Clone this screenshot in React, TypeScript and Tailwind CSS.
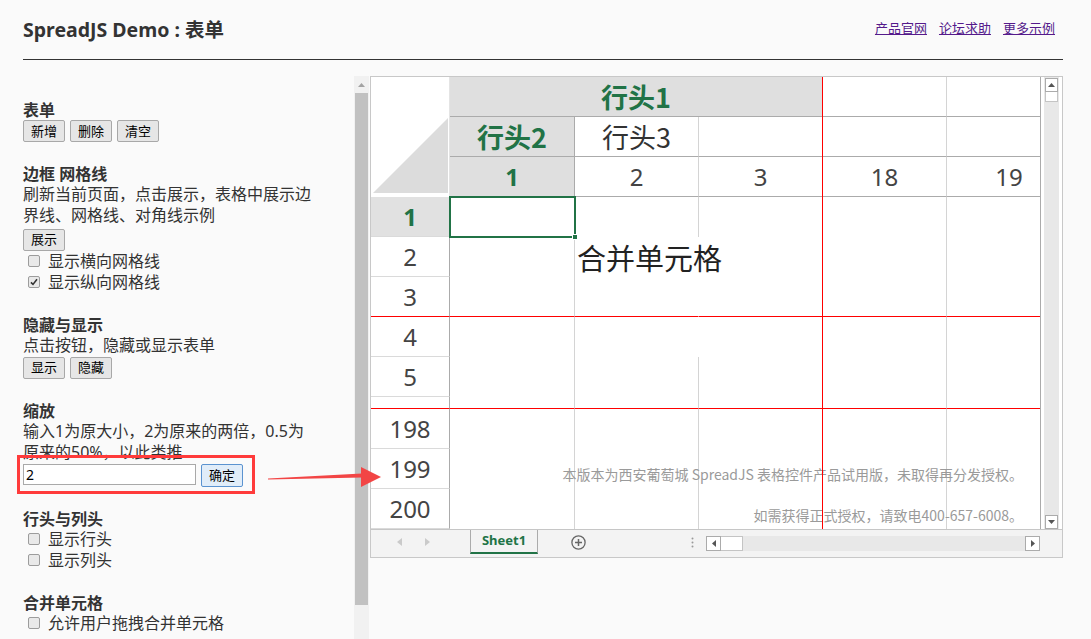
import React from 'react'

const FONT = "font-['Noto_Sans','Noto_Sans_CJK_SC',sans-serif]"
const CJK = "font-['Noto_Sans_CJK_SC','Noto_Sans',sans-serif]"

const Btn = ({ children, blue }: { children: React.ReactNode; blue?: boolean }) => (
  <button
    className={`h-[22px] w-[42px] rounded-[2px] border text-[13px] leading-none text-black ${
      blue ? 'h-[23px] border-[#5b93d0] bg-[#e1edf9]' : 'border-[#a8a8a8] bg-[#e6e6e6]'
    }`}
  >
    {children}
  </button>
)

const Check = ({ label, checked }: { label: string; checked?: boolean }) => (
  <div className="flex items-center h-[21px] pl-[5px]">
    <span className="w-[12px] h-[12px] rounded-[2px] border border-[#9c9c9c] bg-[#e9e9e9] flex items-center justify-center">
      {checked && (
        <svg viewBox="0 0 12 12" className="w-[10px] h-[10px]">
          <path d="M2.3 6.4 L4.8 8.9 L9.6 2.6" stroke="#333" strokeWidth="1.9" fill="none" />
        </svg>
      )}
    </span>
    <span className="ml-[8px] text-[16px] leading-[21px] text-[#333]">{label}</span>
  </div>
)

const Heading = ({ children, first }: { children: React.ReactNode; first?: boolean }) => (
  <div className={`${first ? '' : 'mt-[22px]'} h-[20px] leading-[20px] text-[16px] font-bold text-[#333]`}>{children}</div>
)

const Line = ({ children }: { children: React.ReactNode }) => (
  <div className="h-[21px] leading-[21px] text-[16px] text-[#333] whitespace-nowrap">{children}</div>
)

type RowProps = {
  label: string
  short?: boolean
  sel?: boolean
  red?: boolean
  merged?: boolean
  c1?: React.ReactNode
  c2?: React.ReactNode
}

// one grid row: row header + five visible columns (A, B, C | R, S)
const BodyRow = ({ label, short, sel, red, merged, c1, c2 }: RowProps) => {
  const bb = red ? 'border-b border-b-[#ff0000]' : ''
  return (
    <div className={`flex shrink-0 ${short ? 'h-[12px]' : 'h-[40px]'}`}>
      <div
        className={`w-[79px] shrink-0 border-r border-r-[#ababab] border-b ${
          red ? 'border-b-[#ff0000]' : 'border-b-[#dadada]'
        } ${sel ? 'bg-[#e1e1e1] text-[#217346] font-bold' : 'text-[#444]'} flex items-center justify-center text-[24px] leading-none`}
      >
        {label}
      </div>
      <div className={`w-[125px] shrink-0 relative border-r border-r-[#d4d4d4] ${bb}`}>{c1}</div>
      <div className={`w-[124px] shrink-0 relative border-r ${merged ? 'border-r-transparent' : 'border-r-[#d4d4d4]'} ${bb}`}>
        {c2}
      </div>
      <div className={`w-[124px] shrink-0 border-r border-r-transparent ${bb}`} />
      <div className={`w-[124px] shrink-0 border-r border-r-[#d4d4d4] ${bb}`} />
      <div className={`w-[124px] shrink-0 ${bb}`} />
    </div>
  )
}

const Selection = () => (
  <div className="absolute -left-[1px] -top-[1px] w-[127px] h-[42px] border-2 border-[#217346] z-10">
    <span className="absolute -right-[4px] -bottom-[4px] w-[6px] h-[6px] bg-[#217346] border border-white" />
  </div>
)

const Sheet = () => (
  <div className={`w-[693px] h-[482px] border border-[#c8c8c8] bg-white flex flex-col ${CJK}`}>
    <div className="flex h-[452px]">
      {/* viewport */}
      <div className="relative w-[670px] h-[452px] overflow-hidden border-r border-r-[#ababab] bg-white flex flex-col">
        {/* column headers */}
        <div className="flex shrink-0">
          <div className="relative w-[79px] h-[120px] shrink-0 border-r border-r-[#e4e4e4]">
            <svg className="absolute inset-0" width="78" height="120">
              <polygon points="77,41 77,116 2,116" fill="#dcdcdc" />
            </svg>
          </div>
          <div className="flex flex-col">
            <div className="flex h-[40px]">
              <div className="w-[373px] shrink-0 bg-[#dfdfdf] border-b border-b-[#ababab] border-r border-r-transparent flex items-center justify-center text-[27px] font-bold text-[#217346] leading-none">
                行头1
              </div>
              <div className="w-[124px] shrink-0 border-b border-b-[#ababab] border-r border-r-[#d4d4d4]" />
              <div className="w-[124px] shrink-0 border-b border-b-[#ababab]" />
            </div>
            <div className="flex h-[40px]">
              <div className="w-[125px] shrink-0 bg-[#dfdfdf] border-b border-b-[#ababab] border-r border-r-[#ababab] flex items-center justify-center text-[27px] font-bold text-[#217346] leading-none">
                行头2
              </div>
              <div className="w-[124px] shrink-0 border-b border-b-[#ababab] border-r border-r-[#d4d4d4] flex items-center justify-center text-[27px] text-[#333] leading-none">
                行头3
              </div>
              <div className="w-[124px] shrink-0 border-b border-b-[#ababab] border-r border-r-transparent" />
              <div className="w-[124px] shrink-0 border-b border-b-[#ababab] border-r border-r-[#d4d4d4]" />
              <div className="w-[124px] shrink-0 border-b border-b-[#ababab]" />
            </div>
            <div className={`flex h-[40px] text-[24px] leading-none text-[#444] ${FONT}`}>
              <div className="w-[125px] shrink-0 bg-[#dfdfdf] border-b border-b-[#ababab] border-r border-r-[#ababab] flex items-center justify-center font-bold text-[#217346]">
                1
              </div>
              <div className="w-[124px] shrink-0 border-b border-b-[#ababab] border-r border-r-[#d4d4d4] flex items-center justify-center">
                2
              </div>
              <div className="w-[124px] shrink-0 border-b border-b-[#ababab] border-r border-r-transparent flex items-center justify-center">
                3
              </div>
              <div className="w-[124px] shrink-0 border-b border-b-[#ababab] border-r border-r-[#d4d4d4] flex items-center justify-center">
                18
              </div>
              <div className="w-[124px] shrink-0 border-b border-b-[#ababab] flex items-center justify-center">19</div>
            </div>
          </div>
        </div>

        {/* rows */}
        <div className={FONT}>
          <BodyRow label="1" sel c1={<Selection />} />
          <BodyRow
            label="2"
            merged
            c2={
              <span className={`absolute left-[2px] top-0 z-10 whitespace-nowrap text-[29px] leading-[40px] text-[#222] ${CJK}`}>
                合并单元格
              </span>
            }
          />
          <BodyRow label="3" merged red />
          <BodyRow label="4" merged />
          <BodyRow label="5" />
          <BodyRow label="" short red />
          <BodyRow label="198" />
          <BodyRow label="199" />
          <BodyRow label="200" />
        </div>

        {/* frozen column line */}
        <div className="absolute left-[451px] top-0 w-[1px] h-full bg-[#ff0000] z-20" />

        <div className="absolute right-[17px] top-[387px] whitespace-nowrap text-[14px] leading-[20px] text-[#9a9a9a]">
          本版本为西安葡萄城 SpreadJS 表格控件产品试用版，未取得再分发授权。
        </div>
        <div className="absolute right-[17px] top-[428px] whitespace-nowrap text-[14px] leading-[20px] text-[#9a9a9a]">
          如需获得正式授权，请致电400-657-6008。
        </div>
      </div>

      {/* vertical scrollbar */}
      <div className="w-[21px] h-[452px] bg-white pl-[3px] pr-[3px]">
        <div className="w-[15px] h-full bg-[#e8e8e8] flex flex-col items-center pt-[1px]">
          <div className="w-[13px] h-[14px] border border-[#ababab] bg-white flex items-center justify-center">
            <svg width="7" height="4">
              <polygon points="0,4 3.5,0 7,4" fill="#555" />
            </svg>
          </div>
          <div className="w-[13px] h-[10px] border border-[#c4c4c4] border-t-0 bg-white" />
          <div className="flex-1" />
          <div className="w-[13px] h-[14px] border border-[#ababab] bg-white flex items-center justify-center">
            <svg width="7" height="4">
              <polygon points="0,0 3.5,4 7,0" fill="#555" />
            </svg>
          </div>
        </div>
      </div>
    </div>

    {/* tab bar */}
    <div className="h-[28px] border-t border-t-[#c6c6c6] bg-[#f3f3f3] flex items-start">
      <div className="w-[99px] h-[24px] flex items-center">
        <svg width="5" height="8" className="ml-[26px]">
          <polygon points="5,0 0,4 5,8" fill="#cacaca" />
        </svg>
        <svg width="5" height="8" className="ml-[23px]">
          <polygon points="0,0 5,4 0,8" fill="#cacaca" />
        </svg>
      </div>
      <div
        className={`w-[68px] h-[24px] border-l border-r border-[#ababab] border-b-2 border-b-[#217346] flex items-center justify-center text-[13px] font-bold text-[#217346] ${FONT}`}
      >
        Sheet1
      </div>
      <div className="h-[24px] flex items-center">
        <svg width="15" height="15" className="ml-[33px]">
          <circle cx="7.5" cy="7.5" r="6.6" stroke="#666" strokeWidth="1.3" fill="none" />
          <path d="M7.5 4 V11 M4 7.5 H11" stroke="#666" strokeWidth="1.5" />
        </svg>
        <svg width="3" height="11" className="ml-[105px]">
          <circle cx="1.5" cy="1.5" r="1" fill="#999" />
          <circle cx="1.5" cy="5.5" r="1" fill="#999" />
          <circle cx="1.5" cy="9.5" r="1" fill="#999" />
        </svg>
      </div>
      <div className="ml-[12px] mt-[6px] w-[334px] h-[15px] bg-[#e8e8e8] flex">
        <div className="w-[15px] h-[15px] border border-[#ababab] bg-white flex items-center justify-center">
          <svg width="4" height="7">
            <polygon points="4,0 0,3.5 4,7" fill="#555" />
          </svg>
        </div>
        <div className="w-[22px] h-[15px] border border-l-0 border-[#c4c4c4] bg-white" />
        <div className="flex-1" />
        <div className="w-[15px] h-[15px] border border-[#ababab] bg-white flex items-center justify-center">
          <svg width="4" height="7">
            <polygon points="0,0 4,3.5 0,7" fill="#555" />
          </svg>
        </div>
      </div>
    </div>
  </div>
)

const App = () => {
  return (
    <div className={`relative w-[1091px] h-[639px] overflow-hidden bg-[#fafafa] ${FONT}`}>
      {/* header */}
      <div className="ml-[23px] w-[1040px] h-[60px] border-b border-[#333] flex items-center justify-between">
        <div className="text-[19.5px] font-bold text-[#333] leading-none whitespace-nowrap">SpreadJS Demo : 表单</div>
        <div className="flex gap-[12px] pr-[8px] -mt-[3px] text-[13px] leading-none">
          <a className="text-[#551a8b] underline">产品官网</a>
          <a className="text-[#551a8b] underline">论坛求助</a>
          <a className="text-[#551a8b] underline">更多示例</a>
        </div>
      </div>

      {/* main */}
      <div className="mt-[16px] flex h-[563px]">
        <div className="w-[354px] shrink-0 pl-[23px] pt-[24px] overflow-hidden">
          <Heading first>表单</Heading>
          <div className="flex gap-[5px]">
            <Btn>新增</Btn>
            <Btn>删除</Btn>
            <Btn>清空</Btn>
          </div>

          <div className="mt-[1px]" />
          <Heading>边框 网格线</Heading>
          <Line>刷新当前页面，点击展示，表格中展示边</Line>
          <Line>界线、网格线、对角线示例</Line>
          <Btn>展示</Btn>
          <Check label="显示横向网格线" />
          <Check label="显示纵向网格线" checked />

          <Heading>隐藏与显示</Heading>
          <Line>点击按钮，隐藏或显示表单</Line>
          <div className="mt-[1px] flex gap-[5px]">
            <Btn>显示</Btn>
            <Btn>隐藏</Btn>
          </div>

          <div className="mt-[1px]" />
          <Heading>缩放</Heading>
          <Line>输入1为原大小，2为原来的两倍，0.5为</Line>
          <Line>原来的50%，以此类推</Line>
          <div className="relative flex items-center h-[24px]">
            <div className="w-[173px] h-[21px] border border-[#a9a9a9] bg-white pl-[2px] text-[14px] leading-[19px] text-black">
              2
            </div>
            <div className="ml-[5px]">
              <Btn blue>确定</Btn>
            </div>
            <div className="absolute -left-[6px] -top-[8px] w-[238px] h-[39px] border-[3px] border-[#ff3b3b]" />
          </div>

          <Heading>行头与列头</Heading>
          <Check label="显示行头" />
          <Check label="显示列头" />

          <Heading>合并单元格</Heading>
          <Check label="允许用户拖拽合并单元格" />
        </div>

        {/* panel scrollbar */}
        <div className="w-[15px] shrink-0 h-full bg-[#f1f1f1] flex flex-col items-center">
          <div className="h-[17px] flex items-center justify-center">
            <svg width="7" height="4">
              <polygon points="0,4 3.5,0 7,4" fill="#a3a3a3" />
            </svg>
          </div>
          <div className="w-[13px] h-[512px] bg-[#c1c1c1]" />
        </div>

        <div className="ml-[1px]">
          <Sheet />
        </div>
      </div>

      {/* annotation arrow */}
      <svg className="absolute left-[260px] top-[460px] pointer-events-none" width="130" height="35">
        <polygon points="8,18.6 102,13.6 102,17.4 8,19.6" fill="#f24545" />
        <polygon points="101,7 121,17 101,27" fill="#f24545" />
      </svg>
    </div>
  )
}

export default App
